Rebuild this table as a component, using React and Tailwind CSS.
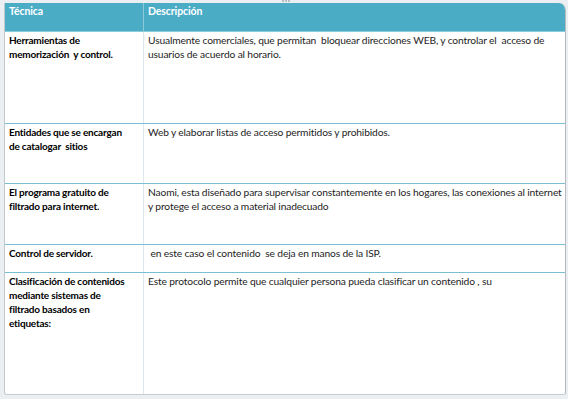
import React from "react";

const rows = [
  {
    h: "h-[92px]",
    tec: ["Herramientas de", "memorización  y control."],
    desc: [
      "Usualmente comerciales, que permitan  bloquear direcciones WEB, y controlar el  acceso de",
      "usuarios de acuerdo al horario.",
    ],
  },
  {
    h: "h-[60px]",
    tec: ["Entidades que se encargan", "de catalogar  sitios"],
    desc: ["Web y elaborar listas de acceso permitidos y prohibidos."],
  },
  {
    h: "h-[61px]",
    tec: ["El programa gratuito de", "filtrado para internet."],
    desc: [
      "Naomi, esta diseñado para supervisar constantemente en los hogares, las conexiones al internet",
      "y protege el acceso a material inadecuado",
    ],
  },
  {
    h: "h-[28px]",
    tec: ["Control de servidor."],
    desc: [" en este caso el contenido  se deja en manos de la ISP."],
  },
  {
    h: "flex-1",
    tec: ["Clasificación de contenidos", "mediante sistemas de", "filtrado basados en", "etiquetas:"],
    desc: ["Este protocolo permite que cualquier persona pueda clasificar un contenido , su"],
  },
];

function Lines({ lines, bold }) {
  return (
    <div
      className={
        bold
          ? "font-bold text-black text-[10px] tracking-[-0.2px]"
          : "text-[#1e1e1e] text-[10.25px] tracking-[-0.15px]"
      }
    >
      {lines.map((l, i) => (
        <span key={i} className="block whitespace-pre">
          {l}
        </span>
      ))}
    </div>
  );
}

export default function App() {
  return (
    <div
      className="w-[568px] h-[399px] bg-[#eceff2] pt-[3px] pl-[4px] pr-[2px] relative"
      style={{ fontFamily: "Lato, 'Open Sans', sans-serif" }}
    >
      <div className="absolute left-[282px] top-0 flex gap-[1px]">
        <span className="w-[2px] h-[2px] bg-[#b9bec4]" />
        <span className="w-[2px] h-[2px] bg-[#b9bec4]" />
        <span className="w-[2px] h-[2px] bg-[#b9bec4]" />
      </div>
      <div className="h-[392px] flex flex-col bg-white border-l border-r border-b border-l-[#c3c8cd] border-r-[#b5bbc1] border-b-[#c7ccd1] rounded-tr-[7px] rounded-b-[3px] leading-[14px] overflow-hidden">
        <div className="h-[29px] shrink-0 flex bg-[#4bacc6] text-white font-bold text-[10.5px] tracking-[-0.1px] border-b border-[#8dcadb]">
          <div className="w-[139px] shrink-0 pl-[4px] pt-[1px] border-r border-[#8ec9d9]">Técnica</div>
          <div className="flex-1 pl-[4px] pt-[1px]">Descripción</div>
        </div>
        {rows.map((r, i) => (
          <div
            key={i}
            className={`${r.h} shrink-0 flex ${i < rows.length - 1 ? "border-b border-[#78bfd3]" : ""}`}
          >
            <div className="w-[139px] shrink-0 pl-[4px] pt-[1px] border-r border-[#dfe6ee]">
              <Lines lines={r.tec} bold />
            </div>
            <div className="flex-1 min-w-0 pl-[4px] pt-[1px]">
              <Lines lines={r.desc} />
            </div>
          </div>
        ))}
      </div>
    </div>
  );
}
